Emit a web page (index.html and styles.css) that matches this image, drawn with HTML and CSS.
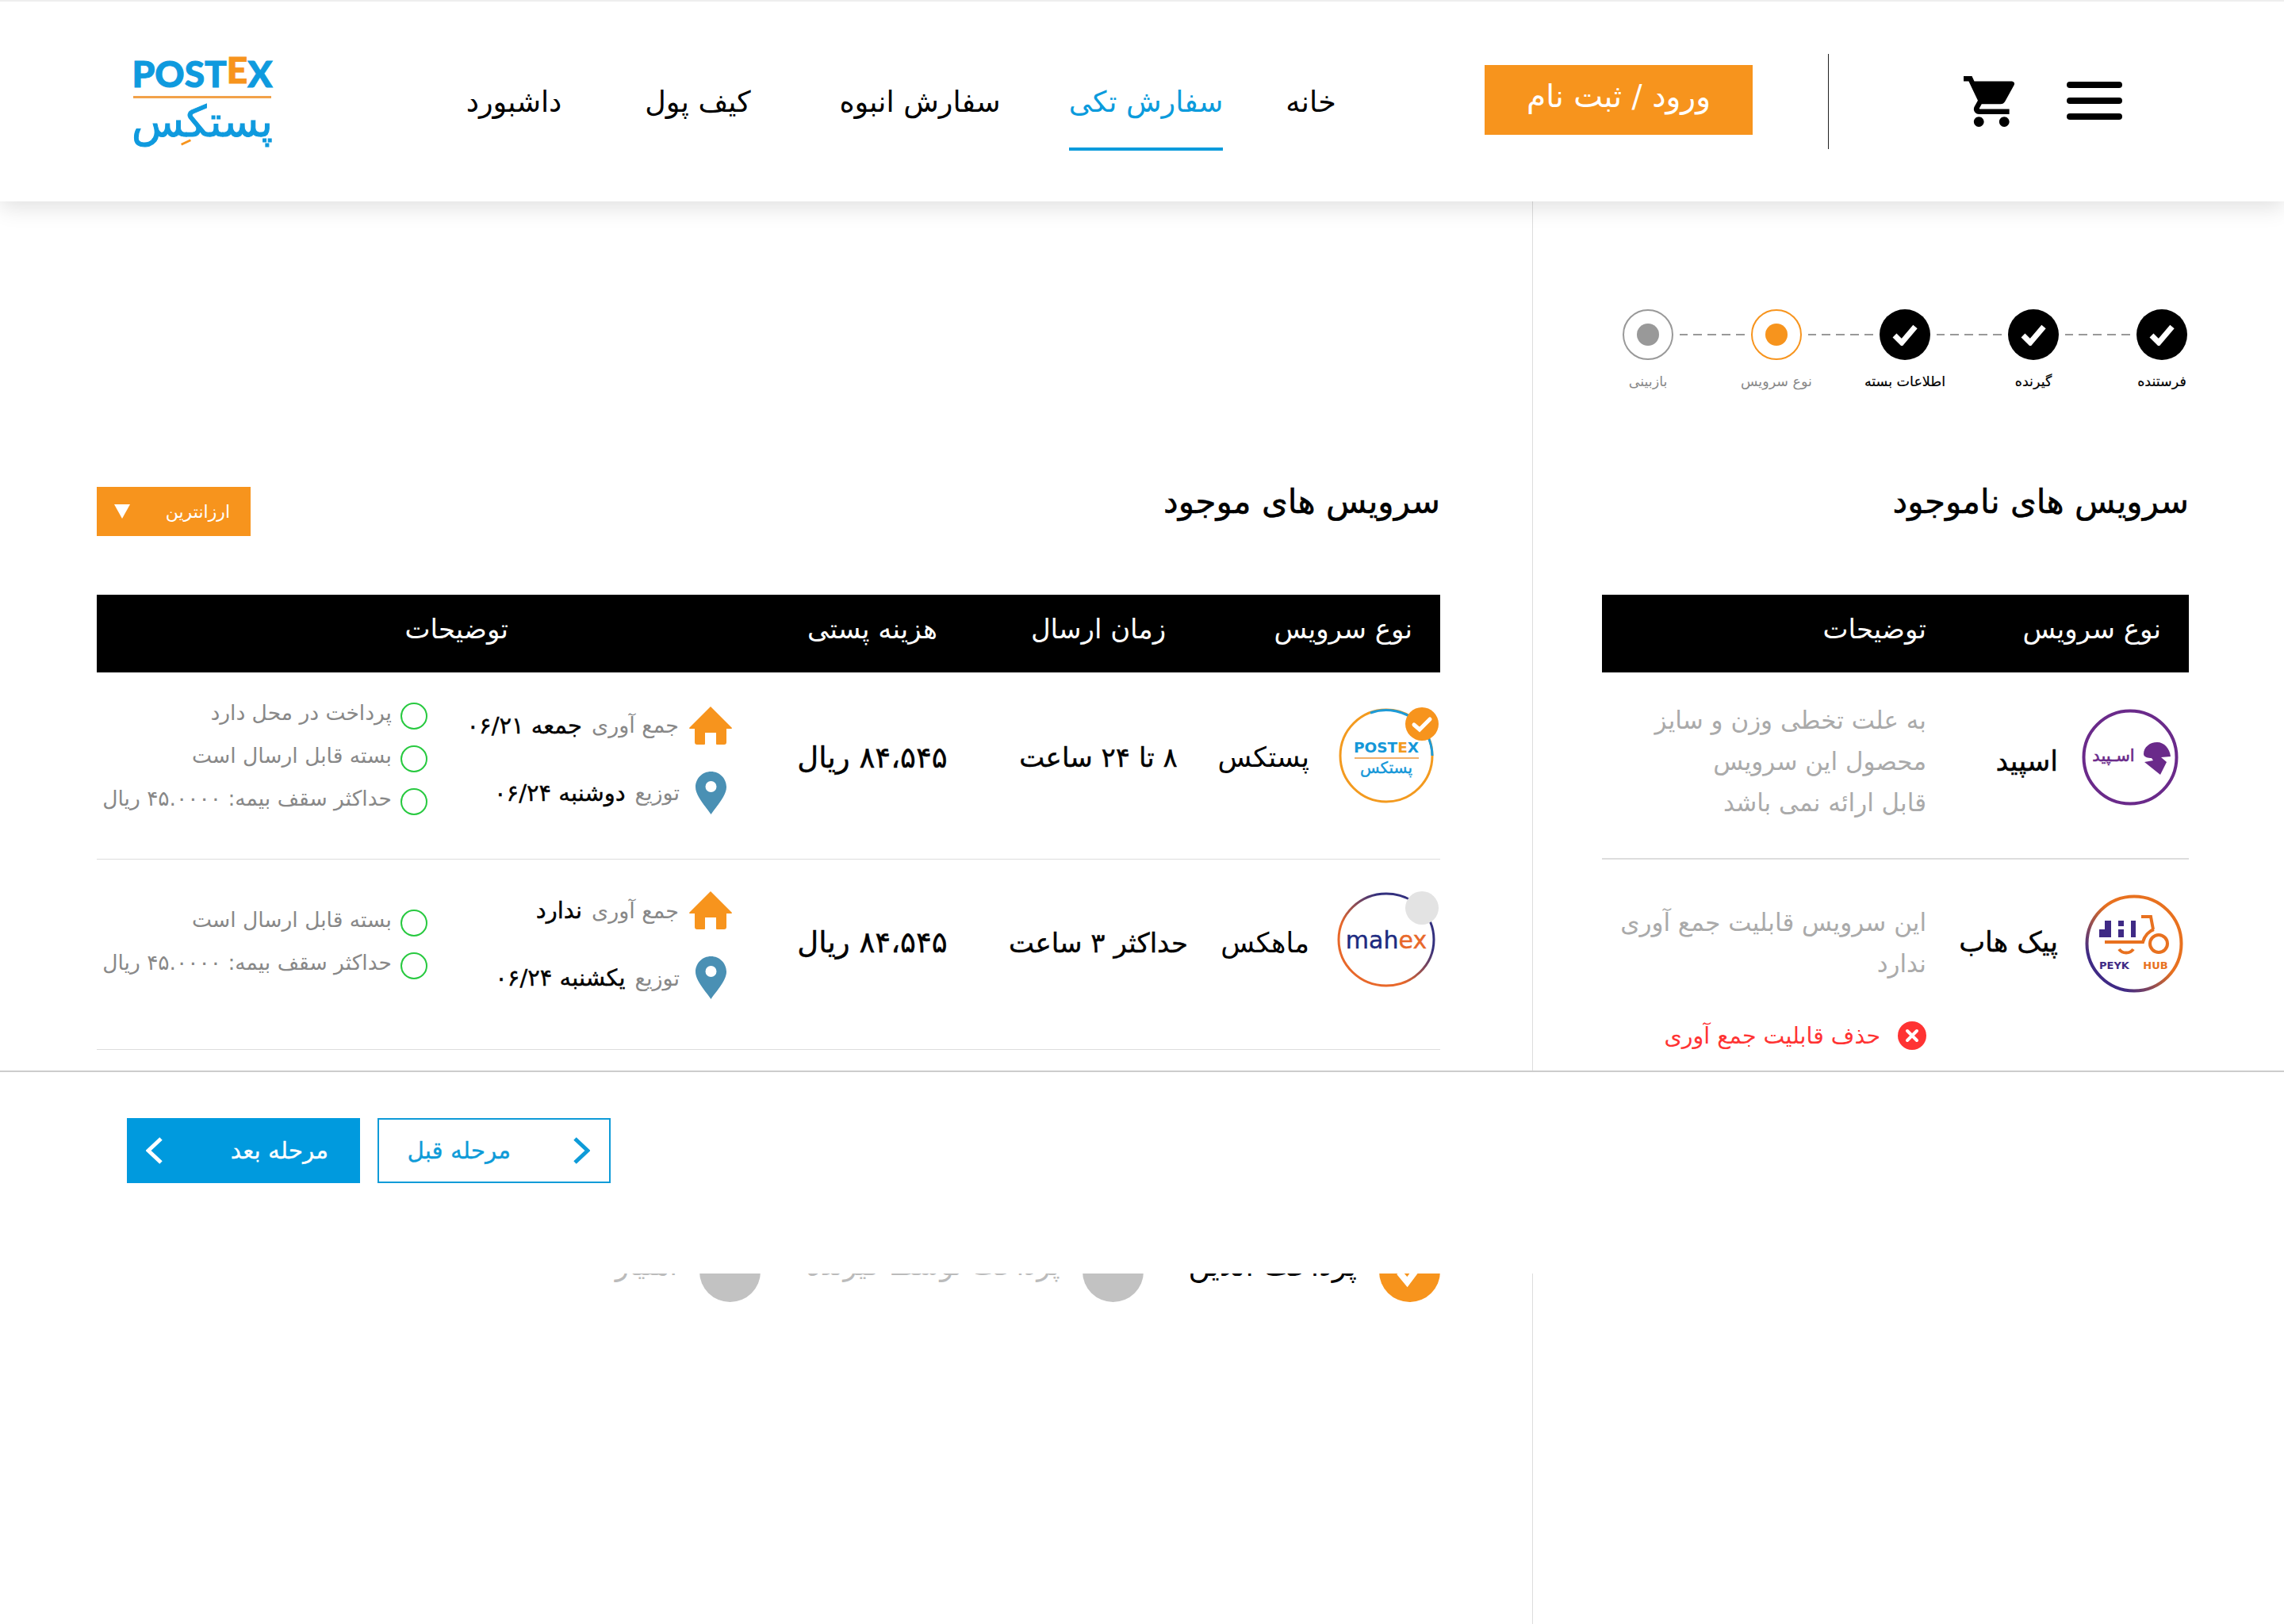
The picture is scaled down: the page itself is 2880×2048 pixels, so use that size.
FILE: index.html

```html
<!DOCTYPE html>
<html lang="fa" dir="rtl">
<head>
  <meta charset="UTF-8" />
  <title>پستکس</title>
  <link rel="stylesheet" href="styles.css">
</head>
<body>
  <div class="page">
    <header class="header">
      <div class="burger"><span></span><span></span><span></span></div>
      <svg class="cart" viewBox="1 2 20.6 20"><path d="M7 18c-1.1 0-1.99.9-1.99 2S5.9 22 7 22s2-.9 2-2-.9-2-2-2zm10 0c-1.1 0-1.99.9-1.99 2s.89 2 1.99 2 2-.9 2-2-.9-2-2-2zM1 2v2h2l3.6 7.59-1.35 2.45c-.16.28-.25.61-.25.96 0 1.1.9 2 2 2h12v-2H7.42c-.14 0-.25-.11-.25-.25l.03-.12.9-1.63h7.45c.75 0 1.41-.41 1.75-1.03l3.58-6.49A1 1 0 0 0 20 4H5.21l-.94-2H1z"/></svg>
      <div class="header-sep"></div>
      <a class="login-btn">ورود / ثبت نام</a>
      <nav class="nav">
        <div class="nav-item"><span>خانه</span></div>
        <div class="nav-item active"><span>سفارش تکی</span></div>
        <div class="nav-item"><span>سفارش انبوه</span></div>
        <div class="nav-item"><span>کیف پول</span></div>
        <div class="nav-item"><span>داشبورد</span></div>
      </nav>
      <div class="brand">
        <div class="brand-en" dir="ltr">POST<b>E</b>X</div>
        <div class="brand-line"></div>
        <div class="brand-fa">پستکس</div>
      </div>
    </header>

    <div class="content">
      <aside class="side">
        <div class="step-dots">
          <div class="dot done"><svg viewBox="0 0 34 28"><path d="M4 15l9 9L30 4"/></svg></div>
          <div class="dash"></div>
          <div class="dot done"><svg viewBox="0 0 34 28"><path d="M4 15l9 9L30 4"/></svg></div>
          <div class="dash"></div>
          <div class="dot done"><svg viewBox="0 0 34 28"><path d="M4 15l9 9L30 4"/></svg></div>
          <div class="dash"></div>
          <div class="dot current"><i></i></div>
          <div class="dash"></div>
          <div class="dot todo"><i></i></div>
        </div>
        <div class="step-labels">
          <span class="on">فرستنده</span>
          <span class="on">گیرنده</span>
          <span class="on">اطلاعات بسته</span>
          <span>نوع سرویس</span>
          <span>بازبینی</span>
        </div>

        <h2 class="title side-title">سرویس های ناموجود</h2>

        <div class="side-head">
          <span>نوع سرویس</span>
          <span>توضیحات</span>
        </div>

        <div class="side-row first">
          <svg class="logo" viewBox="0 0 122 122">
            <circle cx="61" cy="61" r="58.5" fill="#fff" stroke="#6a2a8a" stroke-width="4"/>
            <text class="logo-fa" x="40" y="66" fill="#6a2a8a" stroke="#6a2a8a" stroke-width=".6" font-size="21" text-anchor="middle">اسـپید</text>
            <path fill="#6a2a8a" d="M78 57c0-9 8-15 17-15 9 0 16 8 17 18l-12 1 7 6-8 16-20-16 11-2-2-3c-4 0-10-1-10-5z"/>
          </svg>
          <div class="side-name">اسپید</div>
          <p class="side-desc">به علت تخطی وزن و سایز<br>محصول این سرویس<br>قابل ارائه نمی باشد</p>
        </div>
        <div class="side-row second">
          <svg class="logo peyk" viewBox="0 0 126 124">
            <defs>
              <linearGradient id="peykRing" x1="1" y1="0" x2="0" y2="1">
                <stop offset="0.45" stop-color="#e8711f"/>
                <stop offset="0.8" stop-color="#3f2a85"/>
              </linearGradient>
            </defs>
            <circle cx="63" cy="62" r="59.5" fill="#fff" stroke="url(#peykRing)" stroke-width="4"/>
            <g fill="#3f2a85">
              <rect x="26" y="33" width="8" height="21"/><rect x="19" y="44" width="10" height="10"/>
              <rect x="43" y="33" width="7" height="7"/><rect x="43" y="44" width="7" height="10"/>
              <rect x="59" y="33" width="6" height="21"/>
            </g>
            <g fill="none" stroke="#e8711f" stroke-width="4">
              <path d="M72 28h12l3 16"/><path d="M26 60h48c2-8 8-14 14-16"/>
              <circle cx="94" cy="62" r="11"/><path d="M44 69c4 6 14 6 18 0"/>
            </g>
            <text class="logo-en" x="38" y="94" fill="#3f2a85" font-size="13" font-weight="700" text-anchor="middle">PEYK</text>
            <text class="logo-en" x="90" y="94" fill="#e8711f" font-size="13" font-weight="700" text-anchor="middle">HUB</text>
          </svg>
          <div class="side-name">پیک هاب</div>
          <p class="side-desc">این سرویس قابلیت جمع آوری<br>ندارد</p>
          <div class="remove">
            <svg viewBox="0 0 36 36"><circle cx="18" cy="18" r="18" fill="#f33"/><path d="M12 12l12 12M24 12L12 24" stroke="#fff" stroke-width="4" stroke-linecap="round"/></svg>
            <span>حذف قابلیت جمع آوری</span>
          </div>
        </div>
      </aside>

      <main class="main">
        <div class="main-top">
          <h2 class="title">سرویس های موجود</h2>
          <div class="sort-btn"><span>ارزانترین</span><i class="caret"></i></div>
        </div>

        <div class="main-head main-grid">
          <span class="head-type">نوع سرویس</span>
          <span class="head-center">زمان ارسال</span>
          <span class="head-center">هزینه پستی</span>
          <span class="head-desc">توضیحات</span>
        </div>

        <div class="main-row main-grid">
          <div class="service">
            <div class="logo-wrap">
              <svg class="logo" viewBox="0 0 120 120">
                <circle cx="60" cy="60" r="58" fill="#fff" stroke="#f39a1f" stroke-width="3"/>
                <path d="M40 6a58 58 0 0 1 78 54" fill="none" stroke="#1e9bd7" stroke-width="3"/>
                <text class="logo-en" x="60" y="56" fill="#1597d8" font-size="18.5" font-weight="900" text-anchor="middle">POST<tspan fill="#f39a1f">E</tspan>X</text>
                <rect x="20" y="62" width="81" height="2" fill="#f2b06a"/>
                <text class="logo-fa" x="60" y="82" fill="#1597d8" stroke="#1597d8" stroke-width=".4" font-size="20" text-anchor="middle">پستکس</text>
              </svg>
              <div class="pick picked"><svg viewBox="0 0 42 42"><path d="M11 22l7 6 13-13"/></svg></div>
            </div>
            <div class="name">پستکس</div>
          </div>
          <div class="strong center">۸ تا ۲۴ ساعت</div>
          <div class="strong price center">۸۴،۵۴۵ ریال</div>
          <div class="dates">
            <div class="date-line">
              <svg class="home" viewBox="0 0 54 48"><path d="M27 0L0 27a1 1 0 0 0 1 1h6v17a3 3 0 0 0 3 3h9a1 1 0 0 0 1-1V33h14v14a1 1 0 0 0 1 1h9a3 3 0 0 0 3-3V28h6a1 1 0 0 0 1-1z"/></svg>
              <span class="muted">جمع آوری</span><b>جمعه ۰۶/۲۱</b>
            </div>
            <div class="date-line">
              <svg class="pin" viewBox="0 0 39 54"><path fill-rule="evenodd" d="M19.5 0C8.7 0 0 8.7 0 19.5 0 31 13 44 19.5 54 26 44 39 31 39 19.5 39 8.7 30.3 0 19.5 0zm0 12a7 7 0 1 1 0 14 7 7 0 0 1 0-14z"/></svg>
              <span class="muted">توزیع</span><b>دوشنبه ۰۶/۲۴</b>
            </div>
          </div>
          <ul class="notes">
            <li>پرداخت در محل دارد</li>
            <li>بسته قابل ارسال است</li>
            <li>حداکثر سقف بیمه: ۴۵.۰۰۰۰ ریال</li>
          </ul>
        </div>

        <div class="main-row tall main-grid">
          <div class="service">
            <div class="logo-wrap">
              <svg class="logo wide" viewBox="0 0 124 120">
                <defs>
                  <linearGradient id="mahexRing" x1="0" y1="1" x2="1" y2="0">
                    <stop offset="0.35" stop-color="#e8682a"/>
                    <stop offset="0.7" stop-color="#33307e"/>
                  </linearGradient>
                </defs>
                <ellipse cx="62" cy="60" rx="60" ry="58" fill="#fff" stroke="url(#mahexRing)" stroke-width="3"/>
                <text class="logo-en" x="62" y="71" fill="#1c2a80" stroke="#1c2a80" stroke-width=".4" font-size="30" text-anchor="middle">mah<tspan fill="#e8682a" stroke="#e8682a">ex</tspan></text>
              </svg>
              <div class="pick"></div>
            </div>
            <div class="name">ماهکس</div>
          </div>
          <div class="strong center">حداکثر ۳ ساعت</div>
          <div class="strong price center">۸۴،۵۴۵ ریال</div>
          <div class="dates">
            <div class="date-line">
              <svg class="home" viewBox="0 0 54 48"><path d="M27 0L0 27a1 1 0 0 0 1 1h6v17a3 3 0 0 0 3 3h9a1 1 0 0 0 1-1V33h14v14a1 1 0 0 0 1 1h9a3 3 0 0 0 3-3V28h6a1 1 0 0 0 1-1z"/></svg>
              <span class="muted">جمع آوری</span><b>ندارد</b>
            </div>
            <div class="date-line">
              <svg class="pin" viewBox="0 0 39 54"><path fill-rule="evenodd" d="M19.5 0C8.7 0 0 8.7 0 19.5 0 31 13 44 19.5 54 26 44 39 31 39 19.5 39 8.7 30.3 0 19.5 0zm0 12a7 7 0 1 1 0 14 7 7 0 0 1 0-14z"/></svg>
              <span class="muted">توزیع</span><b>یکشنبه ۰۶/۲۴</b>
            </div>
          </div>
          <ul class="notes">
            <li>بسته قابل ارسال است</li>
            <li>حداکثر سقف بیمه: ۴۵.۰۰۰۰ ریال</li>
          </ul>
        </div>

        <div class="pay-row">
          <div class="pay-option selected">
            <i class="pay-dot"><svg viewBox="0 0 76 76"><path d="M25 39l10 12 18-24"/></svg></i>
            <span>پرداخت آنلاین</span>
          </div>
          <div class="pay-option">
            <i class="pay-dot"></i>
            <span>پرداخت توسط گیرنده</span>
          </div>
          <div class="pay-option">
            <i class="pay-dot"></i>
            <span>امتیاز</span>
          </div>
        </div>
      </main>
    </div>

    <footer class="footer">
      <a class="step-btn prev">
        <svg viewBox="0 0 22 34"><path d="M3 2l16 15L3 32"/></svg>
        <span>مرحله قبل</span>
      </a>
      <a class="step-btn next">
        <span>مرحله بعد</span>
        <svg viewBox="0 0 22 34"><path d="M19 2L3 17l16 15"/></svg>
      </a>
    </footer>
  </div>
</body>
</html>
```

FILE: styles.css

```css
* { box-sizing: border-box; }
html, body { margin: 0; padding: 0; }
body { font-family: "DejaVu Sans", "Noto Sans", sans-serif; color: #000; background: #fff; }

.page { position: relative; width: 2880px; height: 2048px; overflow: hidden; }

/* header */
.header { position: relative; z-index: 2; height: 254px; display: flex; align-items: center; padding-right: 204px; background: #fff; border-top: 2px solid #eee; box-shadow: 0 8px 26px rgba(0,0,0,.12); }
.burger { width: 70px; display: flex; flex-direction: column; gap: 12px; margin-top: -3px; }
.burger span { height: 8px; background: #000; border-radius: 4px; }
.cart { width: 66px; height: 64px; margin-right: 64px; }
.header-sep { width: 1px; height: 120px; background: #222; margin-right: 170px; }
.login-btn { width: 338px; height: 88px; margin-right: 95px; margin-top: -4px; padding-bottom: 10px; display: flex; align-items: center; justify-content: center; background: #f7941d; color: #fff; font-size: 39px; white-space: nowrap; }
.nav { display: grid; grid-template-columns: 214px 202px 368px 192px 272px; margin-right: 112px; align-self: flex-start; padding-top: 101px; }
.nav-item { text-align: center; font-size: 36.5px; }
.nav-item span { display: inline-block; height: 87px; padding-top: 4px; white-space: nowrap; }
.nav-item.active span { color: #0b9bdc; border-bottom: 4px solid #0b9bdc; }
.brand { margin-right: 167px; width: 180px; display: flex; flex-direction: column; align-items: center; color: #0f9ade; margin-top: -4px; }
.brand-en { font-family: "Lato", sans-serif; font-weight: 900; font-size: 46px; line-height: 50px; -webkit-text-stroke: 1px #0f9ade; }
.brand-en b { color: #f7941d; font-weight: 900; vertical-align: 5px; line-height: 0; -webkit-text-stroke: 1px #f7941d; }
.brand-line { width: 174px; height: 3px; background: #f2a24a; margin-top: 3px; }
.brand-fa { position: relative; font-size: 54px; line-height: 60px; -webkit-text-stroke: 1px #0f9ade; white-space: nowrap; }
.brand-fa::after { content: ""; position: absolute; left: 62px; bottom: 3px; width: 13px; height: 3px; background: #f7941d; transform: rotate(-25deg); }

/* two columns */
.content { display: grid; grid-template-columns: 948px 1932px; height: 1794px; }
.side { padding: 136px 120px 0 87px; border-left: 1px solid #ddd; }
.main { padding: 352px 116px 0 122px; }
.title { margin: 0; height: 60px; font-size: 42px; line-height: 54px; font-weight: 400; -webkit-text-stroke: .5px #000; white-space: nowrap; }

/* stepper */
.step-dots { display: flex; align-items: center; margin-right: 2px; width: 712px; }
.dot { flex: none; width: 64px; height: 64px; border-radius: 50%; display: flex; align-items: center; justify-content: center; }
.dot.done { background: #000; }
.dot.done svg { width: 34px; height: 28px; fill: none; stroke: #fff; stroke-width: 7; }
.dot i { width: 28px; height: 28px; border-radius: 50%; }
.dot.current { border: 2px solid #f7941d; }
.dot.current i { background: #f7941d; }
.dot.todo { border: 2px solid #999; }
.dot.todo i { background: #999; }
.dash { flex: 1; height: 2px; margin: 0 8px; background: repeating-linear-gradient(to left, #999 0 11px, transparent 11px 18px); }
.step-labels { display: grid; grid-template-columns: repeat(5, 162px); margin: 15px -47px 0 0; width: 810px; font-size: 17.5px; line-height: 24px; text-align: center; color: #888; }
.step-labels span { white-space: nowrap; }
.step-labels .on { color: #000; -webkit-text-stroke: .2px #000; }
.side-title { margin-top: 113px; }

/* unavailable services */
.side-head { display: flex; align-items: center; height: 98px; margin-top: 84px; padding: 0 35px 12px 0; background: #000; color: #fff; font-size: 34px; }
.side-head span:first-child { width: 296px; }
.side-row { display: grid; grid-template-columns: 165px 166px 1fr; align-items: center; border-bottom: 2px solid #ddd; }
.side-row .logo { width: 122px; height: 122px; margin-right: 13px; }
.side-row.first { height: 236px; padding: 34px 0 44px; }
.side-row.first .logo { margin-bottom: 14px; }
.side-row.second { padding-top: 44px; border-bottom: 0; }
.side-row .logo.peyk { width: 126px; height: 124px; margin-right: 6px; }
.side-name { font-size: 35px; -webkit-text-stroke: .4px #000; white-space: nowrap; margin-bottom: 4px; }
.side-desc { margin: 0 0 3px; font-size: 31px; line-height: 52px; color: #aaa; white-space: nowrap; }
.remove { grid-column: 3; display: flex; align-items: center; gap: 22px; margin-top: 36px; color: #f33; font-size: 28.5px; white-space: nowrap; }
.remove svg { width: 36px; height: 36px; flex: none; }

/* available services */
.main-top { display: flex; justify-content: space-between; align-items: flex-start; }
.sort-btn { width: 194px; height: 62px; margin-top: 8px; display: flex; align-items: center; justify-content: space-between; padding: 0 26px 0 22px; background: #f7941d; color: #fff; font-size: 22px; }
.caret { width: 0; height: 0; border-left: 10px solid transparent; border-right: 10px solid transparent; border-top: 18px solid #fff; }
.main-grid { display: grid; grid-template-columns: 306px 250px 320px 380px 438px; align-items: center; }
.main-head { height: 98px; margin-top: 74px; padding-bottom: 12px; background: #000; color: #fff; font-size: 34px; }
.head-type { padding-right: 35px; }
.head-center { text-align: center; white-space: nowrap; }
.head-desc { grid-column: span 2; padding-right: 299px; }
.main-row { padding: 26px 0 47px; border-bottom: 1px solid #ddd; }
.main-row.tall { padding: 34px 0 64px; }
.logo-wrap { position: relative; width: 120px; height: 120px; flex: none; margin-bottom: 4px; }
.main-row.tall .logo-wrap { margin-bottom: 8px; }
.service { display: flex; align-items: center; gap: 37px; padding-right: 8px; }
.logo-wrap .logo { width: 120px; height: 120px; display: block; }
.logo-wrap .logo.wide { width: 124px; margin-right: -2px; }
.pick { position: absolute; top: -1px; right: -6px; width: 42px; height: 42px; border-radius: 50%; background: #e3e3e3; }
.pick.picked { background: #f7941d; }
.pick svg { display: block; fill: none; stroke: #fff; stroke-width: 5; stroke-linecap: round; }
.name { font-size: 35px; white-space: nowrap; }
.strong { font-size: 34px; -webkit-text-stroke: .4px #000; white-space: nowrap; }
.strong.price { font-size: 37px; }
.center { text-align: center; }
.dates { padding-right: 17px; margin-top: 4px; display: flex; flex-direction: column; gap: 33px; }
.date-line { display: flex; align-items: center; height: 52px; font-size: 27px; white-space: nowrap; }
.date-line b { font-size: 29px; font-weight: 400; -webkit-text-stroke: .4px #000; margin-right: 12px; }
.home { width: 54px; height: 48px; fill: #f7941d; flex: none; margin-left: 13px; }
.pin { width: 39px; height: 54px; fill: #4a90b4; flex: none; margin: 0 7px 0 20px; }
.muted { color: #888; }
.notes { margin: 0; padding: 0 21px 0 0; list-style: none; font-size: 26.5px; color: #888; }
.notes li { position: relative; height: 54px; line-height: 50px; padding-right: 45px; white-space: nowrap; }
.notes li::before { content: ""; position: absolute; right: 0; top: 12px; width: 30px; height: 30px; border: 2px solid #27c93f; border-radius: 50%; }

/* payment, mostly under the footer */
.pay-row { display: flex; margin-top: 241px; color: #bbb; font-size: 35.5px; }
.pay-option { display: flex; align-items: center; gap: 28px; margin-left: 57px; white-space: nowrap; }
.pay-option span { margin-bottom: 16px; }
.pay-option.selected { color: #000; font-size: 37.5px; }
.pay-dot { width: 77px; height: 77px; border-radius: 50%; background: #c2c2c2; flex: none; }
.selected .pay-dot { background: #f7941d; }
.pay-dot svg { fill: none; stroke: #fff; stroke-width: 8; }

/* fixed footer */
.footer { position: absolute; z-index: 3; left: 0; right: 0; top: 1350px; height: 256px; display: flex; gap: 22px; padding: 58px 0 0 160px; justify-content: flex-end; background: #fff; border-top: 2px solid #ccc; }
.step-btn { width: 294px; height: 82px; display: flex; align-items: center; font-size: 29.5px; -webkit-text-stroke: .3px currentColor; border: 2px solid #0e9bd8; white-space: nowrap; }
.step-btn svg { width: 22px; height: 34px; fill: none; stroke-width: 5; flex: none; }
.step-btn.prev { color: #0e9bd8; padding-right: 24px; gap: 78px; }
.step-btn.prev svg { stroke: #0e9bd8; }
.step-btn.next { background: #009ade; border-color: #009ade; color: #fff; padding: 0 38px 0 22px; justify-content: space-between; }
.step-btn.next svg { stroke: #fff; }
```
